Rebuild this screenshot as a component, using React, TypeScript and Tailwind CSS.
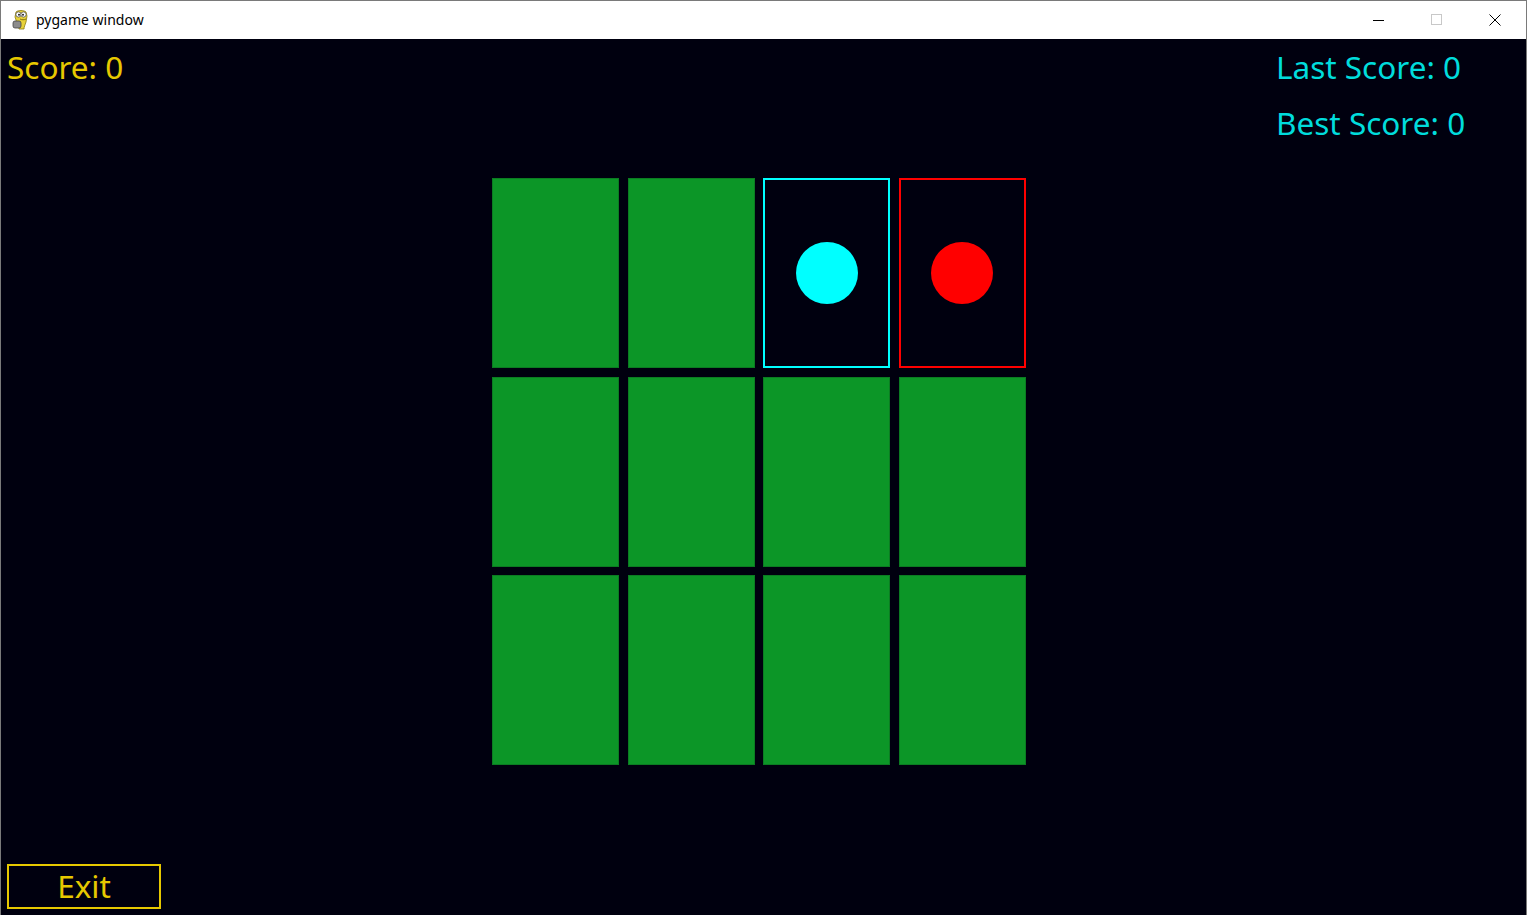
import React from 'react'

const font = { fontFamily: '"Noto Sans", "Open Sans", sans-serif' }

function PygameIcon() {
  return (
    <svg width="20" height="22" viewBox="0 0 20 22">
      <path d="M5 3c2-2 8-2 10 0l1 4-1 6c-1 3-2 5-2 7H8c0-2-1-4-2-6L4 8z" fill="#e8d23a" stroke="#8a7a10" strokeWidth="0.8" />
      <circle cx="7.5" cy="5.5" r="2.6" fill="#fff" stroke="#555" strokeWidth="0.8" />
      <circle cx="12.5" cy="5.5" r="2.6" fill="#fff" stroke="#555" strokeWidth="0.8" />
      <circle cx="8" cy="5.8" r="1" fill="#222" />
      <circle cx="12" cy="5.8" r="1" fill="#222" />
      <rect x="2" y="12" width="8" height="7" rx="2" fill="#8c8c8c" stroke="#444" strokeWidth="0.8" />
      <path d="M9 10c2 1 4 1 6 0" stroke="#6a5a00" strokeWidth="0.8" fill="none" />
    </svg>
  )
}

function WindowControls() {
  return (
    <div className="flex h-full pr-[2px]">
      <div className="w-[58px] h-full flex items-center justify-center">
        <svg width="12" height="12" viewBox="0 0 12 12">
          <path d="M0 6.5h11" stroke="#000" strokeWidth="1" />
        </svg>
      </div>
      <div className="w-[58px] h-full flex items-center justify-center">
        <svg width="12" height="12" viewBox="0 0 12 12">
          <rect x="0.5" y="0.5" width="10" height="10" fill="none" stroke="#c8c8c8" strokeWidth="1" />
        </svg>
      </div>
      <div className="w-[58px] h-full flex items-center justify-center">
        <svg width="12" height="12" viewBox="0 0 12 12">
          <path d="M0.5 0.5l11 11M11.5 0.5l-11 11" stroke="#000" strokeWidth="1" />
        </svg>
      </div>
    </div>
  )
}

type Cell = 'green' | 'cyan' | 'red'

const board: Cell[] = [
  'green', 'green', 'cyan', 'red',
  'green', 'green', 'green', 'green',
  'green', 'green', 'green', 'green',
]

function BoardCell({ kind }: { kind: Cell }) {
  if (kind === 'cyan') {
    return (
      <div className="border-2 border-[#00ffff] flex items-center justify-center">
        <div className="w-[62px] h-[62px] rounded-full bg-[#00ffff]" />
      </div>
    )
  }
  if (kind === 'red') {
    return (
      <div className="border-2 border-[#ff0000] flex items-center justify-center">
        <div className="w-[62px] h-[62px] rounded-full bg-[#ff0000]" />
      </div>
    )
  }
  return <div className="bg-[#0c9627] border border-[#0b7c22]" />
}

export default function App() {
  return (
    <div className="w-[1527px] h-[915px] flex flex-col overflow-hidden border-t border-x border-[#7a7a7a] bg-white" style={font}>
      {/* title bar */}
      <div className="h-[38px] shrink-0 flex items-center bg-white">
        <div className="pl-[10px] pr-[5px] flex items-center">
          <PygameIcon />
        </div>
        <span className="text-[14px] text-black leading-none pb-[1px]">pygame window</span>
        <div className="ml-auto h-full">
          <WindowControls />
        </div>
      </div>

      {/* game surface */}
      <div className="flex-1 flex flex-col bg-[#00000f] pt-[12px]">
        <div className="flex">
          <div className="pl-[6px] text-[31.5px] leading-[32px] text-[#e6c800]">Score: 0</div>
          <div className="ml-auto w-[250px] flex flex-col gap-[24px] text-[31.5px] leading-[32px] text-[#00dcdc]">
            <span>Last Score: 0</span>
            <span>Best Score: 0</span>
          </div>
        </div>

        <div className="mt-[39px] ml-[491px] grid grid-cols-[repeat(4,127px)] grid-rows-[repeat(3,190px)] gap-x-[8.5px] gap-y-[8.5px] w-fit">
          {board.map((c, i) => (
            <BoardCell key={i} kind={c} />
          ))}
        </div>

        <div className="mt-auto mb-[6px] ml-[6px] w-[154px] h-[45px] border-2 border-[#e6c800] flex items-center justify-center">
          <span className="text-[31.5px] leading-[32px] text-[#e6c800] pb-[2px]">Exit</span>
        </div>
      </div>
    </div>
  )
}
